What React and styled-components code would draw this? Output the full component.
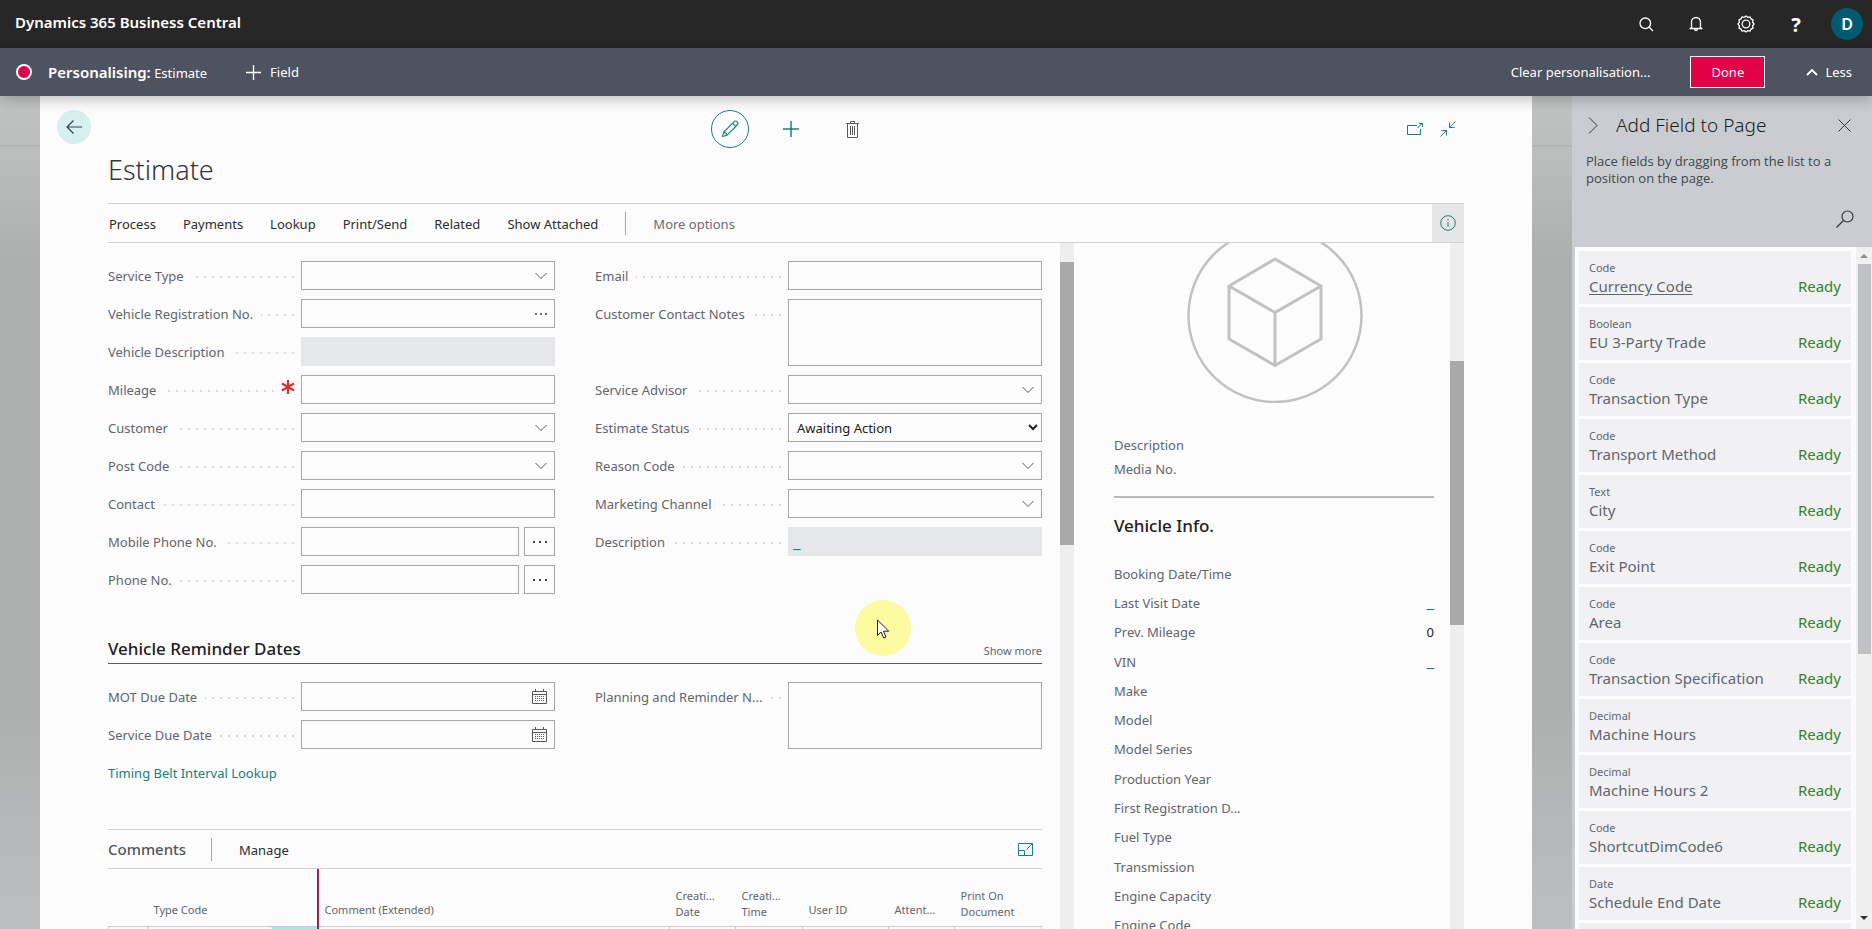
import React from 'react';
import styled, { createGlobalStyle } from 'styled-components';

const teal = '#16807a';
const ink = '#212121';
const labelInk = '#5f666e';
const line = '#d2d2d3';
const boxLine = '#a6a6a6';

const Global = createGlobalStyle`
  *, *::before, *::after { box-sizing: border-box; }
  body { margin: 0; background: #b4b5b5; }
  body, button, input, textarea, select {
    font-family: "Noto Sans", "Open Sans", sans-serif;
    font-size: 13px;
    color: ${ink};
  }
  button { background: none; border: 0; padding: 0; cursor: pointer; }
  h1, h2, h3, p { margin: 0; font-weight: 400; }
  svg { display: block; flex: none; }
`;

const Shell = styled.div`
  height: 100vh;
  display: flex;
  flex-direction: column;
  overflow: hidden;
`;

const Glyph = styled.svg.attrs((p) => ({
  fill: 'none',
  stroke: p.stroke || 'currentColor',
  'aria-hidden': true,
}))``;

/* ---------- top bars ---------- */

const BrandBar = styled.header`
  height: 48px;
  flex: none;
  display: flex;
  align-items: center;
  justify-content: space-between;
  padding: 0 9px 0 15px;
  background: #272727;
  color: #fff;
`;

const Brand = styled.h1`
  font-size: 15px;
  line-height: 44px;
  height: 48px;
  font-weight: 600;
`;

const BrandTools = styled.nav`
  display: flex;
  align-items: center;
`;

const BrandButton = styled.button`
  width: 50px;
  height: 48px;
  display: grid;
  place-items: center;
  color: #fff;
  font-size: 20px;
  font-weight: 700;
`;

const Avatar = styled.button`
  width: 32px;
  height: 32px;
  margin-left: 10px;
  border-radius: 50%;
  background: #005b70;
  color: #fff;
  font-size: 16px;
  font-weight: 600;
`;

const DesignBar = styled.div`
  height: 48px;
  flex: none;
  display: flex;
  align-items: center;
  padding: 0 20px 0 16px;
  background: #4d535f;
  color: #fff;
  position: relative;
  z-index: 2;
  box-shadow: 0 2px 16px rgba(0, 0, 0, 0.28);
`;

const RecordDot = styled.span`
  width: 16px;
  height: 16px;
  border: 2px solid #fff;
  border-radius: 50%;
  background: #e30046;
`;

const DesignTitle = styled.p`
  margin-left: 16px;
  font-size: 13px;
  strong { font-size: 15px; font-weight: 600; }
`;

const BarButton = styled.button`
  display: flex;
  align-items: center;
  gap: ${(p) => p.$gap || 0}px;
  margin-left: ${(p) => p.$left || 0}px;
  color: ${(p) => (p.$dark ? '#33383d' : '#fff')};
`;

const Spacer = styled.span`
  flex: 1;
`;

const DoneButton = styled.button`
  width: 75px;
  height: 32px;
  margin: 0 41px 0 40px;
  border: 1px solid #fff;
  background: #e30046;
  color: #fff;
`;

/* ---------- page frame ---------- */

const Workspace = styled.div`
  flex: 1;
  min-height: 0;
  display: flex;
  background:
    linear-gradient(#c1c2c2 0, #bcbdbd 49px, #b0b1b2 49px, #b0b1b2 50px, rgba(180, 181, 181, 0) 51px),
    linear-gradient(rgba(192, 193, 193, 0.8) 49px, rgba(178, 179, 179, 0) 160px, rgba(178, 179, 179, 0) 74%, #bdbec0 100%),
    #aeafaf;
`;

const Sheet = styled.main`
  flex: 1;
  min-width: 0;
  margin: 0 40px;
  padding: 0 68px;
  display: flex;
  flex-direction: column;
  background: #fcfcfc;
`;

const SheetTop = styled.div`
  display: grid;
  grid-template-columns: 1fr auto 1fr;
  align-items: center;
  height: 66px;
  flex: none;
`;

const BackButton = styled.button`
  width: 34px;
  height: 34px;
  margin: -4px 0 0 -51px;
  display: grid;
  place-items: center;
  border-radius: 50%;
  background: #d7eff0;
  color: #33444c;
`;

const ToolGroup = styled.div`
  display: flex;
  align-items: center;
  gap: ${(p) => p.$gap}px;
  justify-self: ${(p) => (p.$end ? 'end' : 'center')};
  padding: ${(p) => (p.$end ? '0 8px 0 0' : '0 0 0 10px')};
`;

const ToolButton = styled.button`
  width: ${(p) => p.$size || 16}px;
  height: ${(p) => p.$size || 16}px;
  display: grid;
  place-items: center;
  border: ${(p) => (p.$ring ? `1px solid ${teal}` : '0')};
  border-radius: ${(p) => (p.$ring ? '50%' : '0')};
  color: ${(p) => (p.$muted ? '#5a5a60' : teal)};
`;

const PageTitle = styled.h2`
  height: 41px;
  flex: none;
  font-size: 27px;
  line-height: 16px;
  font-weight: 300;
  color: #33353a;
`;

const ActionBar = styled.nav`
  height: 40px;
  flex: none;
  display: flex;
  align-items: center;
  padding-left: 1px;
  border-top: 1px solid ${line};
  border-bottom: 1px solid ${line};
`;

const Action = styled.button`
  margin-right: 27px;
  line-height: 18px;
  padding-top: 2px;
  color: ${(p) => (p.$muted ? '#6a6d75' : '#2b2d30')};
`;

const Divider = styled.span`
  width: 1px;
  height: 23px;
  margin-right: 27px;
  background: #a5a7aa;
`;

const InfoButton = styled.button`
  width: 32px;
  height: 38px;
  margin-left: auto;
  display: grid;
  place-items: center;
  background: #e4e6e8;
  color: ${teal};
`;

const Body = styled.div`
  flex: 1;
  min-height: 0;
  display: flex;
`;

const ScrollTrack = styled.div`
  width: 14px;
  flex: none;
  padding-top: ${(p) => p.$before}px;
  background: #eeeeef;
  &::before {
    content: '';
    display: block;
    height: ${(p) => p.$thumb}px;
    background: #a9a9a9;
  }
`;

/* ---------- form ---------- */

const FormPane = styled.div`
  flex: 1;
  min-width: 0;
  padding: 18px 18px 0 0;
  overflow: hidden;
  position: relative;
`;

const Fields = styled.div`
  display: grid;
  grid-template-columns: 1fr 1fr;
  column-gap: 40px;
`;

const FieldColumn = styled.div`
  display: flex;
  flex-direction: column;
  gap: 9px;
`;

const FieldRow = styled.div`
  display: flex;
  align-items: flex-start;
`;

const Caption = styled.label`
  width: 193px;
  height: 29px;
  flex: none;
  display: flex;
  align-items: center;
  color: ${labelInk};
  white-space: nowrap;
`;

const Leader = styled.span`
  flex: 1;
  height: 2px;
  margin: 2px 7px 0 8px;
  background: repeating-linear-gradient(to left, #d9d9db 0 2px, transparent 2px 8px);
`;

const Mandatory = styled.span`
  width: 16px;
  margin-right: 4px;
  padding-bottom: 5px;
  color: #d9302c;
`;

const BoxFrame = styled.div`
  flex: 1;
  min-width: 0;
  height: ${(p) => (p.$tall ? 67 : 29)}px;
  display: flex;
  align-items: center;
  padding-right: ${(p) => (p.$adorned ? 7 : 0)}px;
  border: ${(p) => (p.$readOnly ? '0' : `1px solid ${boxLine}`)};
  background: ${(p) => (p.$readOnly ? '#e5e7e9' : '#fdfdfd')};
`;

const TextBox = styled.input`
  flex: 1;
  min-width: 0;
  width: 100%;
  height: 100%;
  padding: 0 7px;
  border: 0;
  outline: 0;
  background: transparent;
`;

const NotesBox = styled(TextBox).attrs({ as: 'textarea' })`
  resize: none;
`;

const StatusSelect = styled.select`
  flex: 1;
  height: 100%;
  padding: 0 4px;
  border: 0;
  background: transparent;
`;

const InlineButton = styled.button`
  display: grid;
  place-items: center;
  color: #55585c;
`;

const AssistButton = styled.button`
  width: 31px;
  height: 29px;
  margin-left: 5px;
  display: grid;
  place-items: center;
  border: 1px solid ${boxLine};
`;

const DashLink = styled.a`
  padding-left: ${(p) => (p.$inset ? 5 : 0)}px;
  color: ${teal};
  font-size: 17px;
  line-height: 18px;
  text-decoration: none;
`;

const SectionHead = styled.div`
  display: flex;
  align-items: flex-end;
  justify-content: space-between;
  height: 70px;
  margin-bottom: 18px;
  padding-bottom: 3px;
  border-bottom: 1px solid #55585c;
`;

const SectionTitle = styled.h3`
  font-size: 17px;
  line-height: 22px;
  font-weight: 500;
`;

const ShowMore = styled.button`
  font-size: 11px;
  line-height: 18px;
  color: ${labelInk};
`;

const TextLink = styled.a`
  line-height: 30px;
  color: ${teal};
  text-decoration: none;
`;

const CommentsBar = styled.div`
  display: flex;
  align-items: center;
  height: 40px;
  margin-top: 41px;
  padding-right: 9px;
  border-top: 1px solid ${line};
  border-bottom: 1px solid ${line};
`;

const CommentsTitle = styled.h3`
  width: 103px;
  font-size: 15px;
  font-weight: 500;
  color: #50575e;
`;

const Grid = styled.table`
  width: 100%;
  table-layout: fixed;
  border-collapse: collapse;
`;

const HeadCell = styled.th`
  width: ${(p) => (p.$w ? `${p.$w}px` : 'auto')};
  height: 57px;
  padding: 0 0 ${(p) => (p.$double ? 6 : 8)}px 6px;
  border-bottom: 1px solid #c9cacb;
  border-right: ${(p) => (p.$marker ? '2px solid #b01b4c' : '0')};
  vertical-align: bottom;
  text-align: left;
  font-size: 11px;
  line-height: 16px;
  font-weight: 400;
  color: ${labelInk};
  white-space: pre-line;
`;

const Cell = styled.td`
  height: 30px;
  border-right: ${(p) => (p.$marker ? '2px solid #b01b4c' : '1px solid #c9cacb')};
  border-left: ${(p) => (p.$first ? '1px solid #c9cacb' : '0')};
  background: ${(p) => (p.$marker ? 'linear-gradient(to left, #a9e6e6 46px, transparent 46px)' : 'transparent')};
`;

const Pointer = styled.div`
  position: absolute;
  top: 357px;
  left: 747px;
  width: 56px;
  height: 56px;
  padding: 19px 0 0 22px;
  border-radius: 50%;
  background: #fdfba0;
`;

/* ---------- fact box ---------- */

const FactPane = styled.aside`
  width: 376px;
  flex: none;
  padding: 0 16px 0 40px;
  overflow: hidden;
`;

const PictureFrame = styled.div`
  display: flex;
  justify-content: center;
  height: 190px;
  padding-left: 2px;
`;

const FactList = styled.dl`
  margin: 0;
  display: grid;
  grid-auto-rows: 24px;
  ${(p) => p.$divided && 'padding-bottom: 15px; border-bottom: 2px solid #b9b9bb;'}
  ${(p) => p.$roomy && 'height: 381px; grid-auto-rows: 1fr; margin-top: 21px;'}
`;

const FactRow = styled.div`
  display: flex;
  align-items: center;
  justify-content: space-between;
  dt {
    white-space: nowrap;
    color: ${labelInk};
  }
  dd { margin: 0; }
`;

const FactTitle = styled.h3`
  margin-top: 16px;
  font-size: 17px;
  line-height: 24px;
  font-weight: 500;
`;

/* ---------- field list panel ---------- */

const Panel = styled.aside`
  width: 300px;
  flex: none;
  display: flex;
  flex-direction: column;
  padding-left: 3px;
  background: #c9ccd0;
`;

const PanelHead = styled.div`
  height: 151px;
  flex: none;
  padding: 17px 18px 0 11px;
  color: #42474c;
`;

const PanelTitleRow = styled.div`
  display: flex;
  align-items: center;
  height: 24px;
  padding-right: 3px;
`;

const PanelTitle = styled.h2`
  flex: 1;
  margin-left: 18px;
  font-size: 19px;
  line-height: 24px;
  font-weight: 300;
  color: #1c1f22;
`;

const PanelText = styled.p`
  margin-top: 16px;
  font-family: "Open Sans", "Noto Sans", sans-serif;
  font-size: 13px;
  line-height: 17px;
`;

const PanelSearch = styled.button`
  display: block;
  margin: 23px 0 0 auto;
  color: #33383d;
`;

const PanelList = styled.div`
  flex: 1;
  min-height: 0;
  display: flex;
  justify-content: space-between;
  background: #fcfcfc;
`;

const Cards = styled.ul`
  flex: 1;
  margin: 0;
  padding: 4px 5px 0 4px;
  list-style: none;
  overflow: hidden;
`;

const Card = styled.li`
  height: 53px;
  margin-bottom: 3px;
  padding: 8px 10px 0;
  background: #f1f1f4;
`;

const CardType = styled.div`
  font-size: 11px;
  line-height: 18px;
  color: ${labelInk};
`;

const CardLine = styled.div`
  display: flex;
  justify-content: space-between;
  font-size: 15px;
  line-height: 18px;
  color: ${labelInk};
`;

const CardName = styled.span`
  text-decoration: ${(p) => (p.$active ? 'underline' : 'none')};
  text-underline-offset: 2px;
`;

const Ready = styled.span`
  color: #37812e;
`;

const PanelScroll = styled.div`
  width: 16px;
  display: flex;
  flex-direction: column;
  align-items: center;
  background: #f0f0f1;
  &::after { content: ''; order: 1; flex: 1; }
`;

const PanelThumb = styled.span`
  width: 13px;
  height: 390px;
  background: #c0c1c2;
`;

const ArrowSlot = styled.span`
  height: 17px;
  order: ${(p) => (p.$last ? 2 : 0)};
  margin-bottom: ${(p) => (p.$last ? 3 : 0)}px;
  display: grid;
  place-items: center;
`;

/* ---------- drawings ---------- */

const Chevron = () => (
  <Glyph width="12" height="8" viewBox="0 0 12 8"><path d="M.5 1 6 6.5 11.5 1" /></Glyph>
);

const Dots = ({ wide }) => (
  <Glyph width={wide ? 16 : 12} height="4" viewBox={wide ? '0 0 16 4' : '0 0 12 4'}>
    <path
      fill={wide ? '#3c3f43' : '#6a6d70'}
      stroke="none"
      d={wide ? 'M1 1h2v2H1zM7 1h2v2H7zM13 1h2v2h-2z' : 'M0 1h2v2H0zM5 1h2v2H5zM10 1h2v2h-2z'}
    />
  </Glyph>
);

const Calendar = () => (
  <Glyph width="15" height="15" viewBox="0 0 15 15">
    <path d="M.5 2.5h14v12H.5zM.5 5.5h14M3.5 0v3M11.5 0v3" />
    <path strokeDasharray="1 1" d="M3 7.5h9M3 9.5h9M3 11.5h9" />
  </Glyph>
);

const Asterisk = () => (
  <Glyph width="14" height="14" viewBox="0 0 14 14" strokeWidth="2.2">
    <path d="M7 0v14M1 3.5l12 7M1 10.500l12-7" />
  </Glyph>
);

/* ---------- field building blocks ---------- */

function Field({ label, kind, mandatory }) {
  const id = label.toLowerCase().replace(/[^a-z]+/g, '-');
  const adornment = {
    lookup: <InlineButton aria-label={`Look up ${label}`}><Chevron /></InlineButton>,
    more: <InlineButton aria-label={`Choose ${label}`}><Dots /></InlineButton>,
    date: <InlineButton aria-label={`Pick ${label}`}><Calendar /></InlineButton>,
  }[kind];
  let content = <TextBox id={id} type="text" readOnly={kind === 'readonly'} />;
  if (kind === 'notes') content = <NotesBox id={id} />;
  if (kind === 'status') {
    content = (
      <StatusSelect id={id} defaultValue="Awaiting Action">
        <option>Awaiting Action</option>
      </StatusSelect>
    );
  }
  if (kind === 'link') content = <DashLink id={id} href="#description" $inset>_</DashLink>;
  return (
    <FieldRow>
      <Caption htmlFor={id}>
        {label}
        <Leader />
        {mandatory && <Mandatory><Asterisk /></Mandatory>}
      </Caption>
      <BoxFrame $tall={kind === 'notes'} $readOnly={kind === 'readonly' || kind === 'link'} $adorned={!!adornment}>
        {content}
        {adornment}
      </BoxFrame>
      {kind === 'phone' && <AssistButton aria-label={`${label} options`}><Dots wide /></AssistButton>}
    </FieldRow>
  );
}

const leftFields = [
  { label: 'Service Type', kind: 'lookup' },
  { label: 'Vehicle Registration No.', kind: 'more' },
  { label: 'Vehicle Description', kind: 'readonly' },
  { label: 'Mileage', mandatory: true },
  { label: 'Customer', kind: 'lookup' },
  { label: 'Post Code', kind: 'lookup' },
  { label: 'Contact' },
  { label: 'Mobile Phone No.', kind: 'phone' },
  { label: 'Phone No.', kind: 'phone' },
];

const rightFields = [
  { label: 'Email' },
  { label: 'Customer Contact Notes', kind: 'notes' },
  { label: 'Service Advisor', kind: 'lookup' },
  { label: 'Estimate Status', kind: 'status' },
  { label: 'Reason Code', kind: 'lookup' },
  { label: 'Marketing Channel', kind: 'lookup' },
  { label: 'Description', kind: 'link' },
];

const facts = [
  ['Booking Date/Time'], ['Last Visit Date', '_'], ['Prev. Mileage', '0'], ['VIN', '_'], ['Make'],
  ['Model'], ['Model Series'], ['Production Year'], ['First Registration D...'], ['Fuel Type'],
  ['Transmission'], ['Engine Capacity'], ['Engine Code'],
];

const cards = [
  ['Code', 'Currency Code'], ['Boolean', 'EU 3-Party Trade'], ['Code', 'Transaction Type'],
  ['Code', 'Transport Method'], ['Text', 'City'], ['Code', 'Exit Point'], ['Code', 'Area'],
  ['Code', 'Transaction Specification'], ['Decimal', 'Machine Hours'], ['Decimal', 'Machine Hours 2'],
  ['Code', 'ShortcutDimCode6'], ['Date', 'Schedule End Date'],
];

const columns = [
  { text: '', w: 39 },
  { text: 'Type Code', w: 170, marker: true },
  { text: 'Comment (Extended)' },
  { text: 'Creati...\nDate', w: 66, double: true },
  { text: 'Creati...\nTime', w: 67, double: true },
  { text: 'User ID', w: 86 },
  { text: 'Attent...', w: 66 },
  { text: 'Print On\nDocument', w: 87, double: true },
];

export default function App() {
  return (
    <Shell>
      <Global />
      <BrandBar>
        <Brand>Dynamics 365 Business Central</Brand>
        <BrandTools>
          <BrandButton aria-label="Search">
            <Glyph width="15" height="15" viewBox="0 0 15 15" strokeWidth="1.3">
              <circle cx="6.300" cy="6.300" r="5.300" /><path d="m10 10 4 4" />
            </Glyph>
          </BrandButton>
          <BrandButton aria-label="Notifications">
            <Glyph width="14" height="16" viewBox="0 0 14 16" strokeWidth="1.3">
              <path d="M2.500 12.500V6a4.500 4.500 0 0 1 9 0v6.500M.5 12.500h13M5.500 13a1.500 1.500 0 0 0 3 0" />
            </Glyph>
          </BrandButton>
          <BrandButton aria-label="Settings">
            <Glyph width="18" height="18" viewBox="0 0 18 18" strokeWidth="1.3">
              <path d="m7.200 2.300 1.800-1.300 1.800 1.300 2.300-.4.9 2 2 .9-.4 2.400L17 9l-1.400 1.800.4 2.400-2 .9-.9 2-2.300-.4L9 17l-1.800-1.300-2.300.4-.9-2-2-.9.4-2.400L1 9l1.400-1.800L2 4.800l2-.9.900-2z" />
              <circle cx="9" cy="9" r="3.800" />
            </Glyph>
          </BrandButton>
          <BrandButton aria-label="Help">?</BrandButton>
          <Avatar aria-label="Account">D</Avatar>
        </BrandTools>
      </BrandBar>

      <DesignBar>
        <RecordDot />
        <DesignTitle><strong>Personalising:</strong> Estimate</DesignTitle>
        <BarButton $gap={9} $left={39}>
          <Glyph width="15" height="15" viewBox="0 0 15 15" strokeWidth="1.3"><path d="M7.500 0v15M0 7.500h15" /></Glyph>
          Field
        </BarButton>
        <Spacer />
        <BarButton>Clear personalisation...</BarButton>
        <DoneButton>Done</DoneButton>
        <BarButton $gap={7}>
          <Glyph width="12" height="8" viewBox="0 0 12 8" strokeWidth="1.800"><path d="m1 7 5-5 5 5" /></Glyph>
          Less
        </BarButton>
      </DesignBar>

      <Workspace>
        <Sheet>
          <SheetTop>
            <BackButton aria-label="Back">
              <Glyph width="16" height="14" viewBox="0 0 16 14" strokeWidth="1.2"><path d="M16 7H1M7.500.5 1 7l6.500 6.500" /></Glyph>
            </BackButton>
            <ToolGroup $gap={23}>
              <ToolButton $ring $size={38} aria-label="Edit">
                <Glyph width="18" height="18" viewBox="0 0 18 18" strokeWidth="1.1">
                  <path d="m1.500 16.500 1.200-4.400L13 1.800a2.200 2.200 0 0 1 3.200 3.200L5.900 15.300zM2.700 12.100c1.800.2 2.900 1.300 3.200 3.200M11.600 3.300l3.100 3.100" />
                </Glyph>
              </ToolButton>
              <ToolButton $size={38} aria-label="New">
                <Glyph width="16" height="16" viewBox="0 0 16 16" strokeWidth="1.500"><path d="M8 0v16M0 8h16" /></Glyph>
              </ToolButton>
              <ToolButton $muted $size={38} aria-label="Delete">
                <Glyph width="13" height="17" viewBox="0 0 13 17">
                  <path d="M0 2.500h13M4.500 2.500v-2h4v2M1.500 2.500v14h10v-14M4.500 5v9M6.500 5v9M8.500 5v9" />
                </Glyph>
              </ToolButton>
            </ToolGroup>
            <ToolGroup $gap={17} $end>
              <ToolButton aria-label="Open in new window">
                <Glyph width="16" height="12" viewBox="0 0 16 12"><path d="M10 2.500H.5v9h13V6M10.500 5l4.500-4.500M12 .5h3.500V4" /></Glyph>
              </ToolButton>
              <ToolButton aria-label="Collapse">
                <Glyph width="16" height="16" viewBox="0 0 16 16"><path d="M15.500.5 9.500 6.500M9.500 1.500v5h5M.5 15.500l6-6M1.500 9.500h5v5" /></Glyph>
              </ToolButton>
            </ToolGroup>
          </SheetTop>
          <PageTitle>Estimate</PageTitle>
          <ActionBar>
            {['Process', 'Payments', 'Lookup', 'Print/Send', 'Related', 'Show Attached'].map((t) => (
              <Action key={t}>{t}</Action>
            ))}
            <Divider />
            <Action $muted>More options</Action>
            <InfoButton aria-label="Details">
              <Glyph width="16" height="16" viewBox="0 0 16 16"><circle cx="8" cy="8" r="7.300" /><path d="M8 7v5M8 4v1.500" /></Glyph>
            </InfoButton>
          </ActionBar>

          <Body>
            <FormPane>
              <Fields>
                <FieldColumn>{leftFields.map((f) => <Field key={f.label} {...f} />)}</FieldColumn>
                <FieldColumn>{rightFields.map((f) => <Field key={f.label} {...f} />)}</FieldColumn>
              </Fields>

              <SectionHead>
                <SectionTitle>Vehicle Reminder Dates</SectionTitle>
                <ShowMore>Show more</ShowMore>
              </SectionHead>
              <Fields>
                <FieldColumn>
                  <Field label="MOT Due Date" kind="date" />
                  <Field label="Service Due Date" kind="date" />
                  <TextLink href="#timing-belt">Timing Belt Interval Lookup</TextLink>
                </FieldColumn>
                <FieldColumn>
                  <Field label="Planning and Reminder N..." kind="notes" />
                </FieldColumn>
              </Fields>

              <CommentsBar>
                <CommentsTitle>Comments</CommentsTitle>
                <Divider />
                <Action>Manage</Action>
                <Spacer />
                <ToolButton aria-label="Expand comments">
                  <Glyph width="15" height="13" viewBox="0 0 15 13"><path d="M.5.5h14v12H.5zM.5 7.500h6v5M8.500 6.500 14 1M10.500.5h4V5" /></Glyph>
                </ToolButton>
              </CommentsBar>
              <Grid>
                <thead>
                  <tr>
                    {columns.map((c) => (
                      <HeadCell key={c.text} $w={c.w} $marker={c.marker} $double={c.double}>{c.text}</HeadCell>
                    ))}
                  </tr>
                </thead>
                <tbody>
                  <tr>
                    {columns.map((c, i) => <Cell key={c.text} $marker={c.marker} $first={i === 0} />)}
                  </tr>
                </tbody>
              </Grid>

              <Pointer>
                <Glyph width="13" height="20" viewBox="0 0 13 20">
                  <path fill="#fff" stroke="#222" d="M.5 1v15.500l3.700-3.500 2.500 6 2.300-1-2.500-5.800h5.200z" />
                </Glyph>
              </Pointer>
            </FormPane>
            <ScrollTrack $before={19} $thumb={283} />
            <FactPane>
              <PictureFrame>
                <Glyph width="176" height="160" viewBox="0 15 176 160" stroke="#c2c2c2" strokeWidth="2.500">
                  <circle cx="88" cy="87.500" r="86.500" />
                  <path strokeWidth="3" d="M88 31 42 58v53l46 26.500 46-26.500V58zM42 58l46 26.500L134 58M88 84.500v53" />
                </Glyph>
              </PictureFrame>
              <FactList $divided>
                <FactRow><dt>Description</dt></FactRow>
                <FactRow><dt>Media No.</dt></FactRow>
              </FactList>
              <FactTitle>Vehicle Info.</FactTitle>
              <FactList $roomy>
                {facts.map(([name, value]) => (
                  <FactRow key={name}>
                    <dt>{name}</dt>
                    {value && <dd>{value === '_' ? <DashLink href={`#${name}`}>_</DashLink> : value}</dd>}
                  </FactRow>
                ))}
              </FactList>
            </FactPane>
            <ScrollTrack $before={118} $thumb={264} />
          </Body>
        </Sheet>

        <Panel>
          <PanelHead>
            <PanelTitleRow>
              <BarButton $dark $left={2} aria-label="Collapse panel">
                <Glyph width="10" height="17" viewBox="0 0 10 17"><path d="m1 .5 8 8-8 8" /></Glyph>
              </BarButton>
              <PanelTitle>Add Field to Page</PanelTitle>
              <BarButton $dark aria-label="Close panel">
                <Glyph width="13" height="13" viewBox="0 0 13 13"><path d="m.5.5 12 12M12.500.5l-12 12" /></Glyph>
              </BarButton>
            </PanelTitleRow>
            <PanelText>Place fields by dragging from the list to a position on the page.</PanelText>
            <PanelSearch aria-label="Search fields">
              <Glyph width="18" height="18" viewBox="0 0 18 18" strokeWidth="1.200"><circle cx="11.500" cy="6.500" r="5.500" /><path d="M7.500 10.500.5 17.500" /></Glyph>
            </PanelSearch>
          </PanelHead>
          <PanelList>
            <Cards>
              {cards.map(([type, name], i) => (
                <Card key={name}>
                  <CardType>{type}</CardType>
                  <CardLine><CardName $active={i === 0}>{name}</CardName><Ready>Ready</Ready></CardLine>
                </Card>
              ))}
              <Card />
            </Cards>
            <PanelScroll>
              <ArrowSlot><Glyph width="8" height="4" viewBox="0 0 8 4"><path fill="#8c8c8c" stroke="none" d="M0 4 4 0l4 4z" /></Glyph></ArrowSlot>
              <PanelThumb />
              <ArrowSlot $last><Glyph width="8" height="4" viewBox="0 0 8 4"><path fill="#333" stroke="none" d="m0 0 4 4 4-4z" /></Glyph></ArrowSlot>
            </PanelScroll>
          </PanelList>
        </Panel>
      </Workspace>
    </Shell>
  );
}
